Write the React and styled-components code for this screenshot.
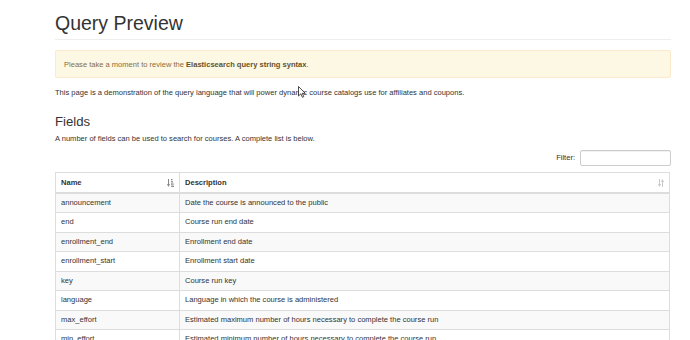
import React from 'react'
import styled, {createGlobalStyle} from 'styled-components'

const GlobalStyle = createGlobalStyle`
	html, body {
		margin: 0;
		padding: 0;
		background: #fff;
	}
	body {
		font-family: "Liberation Sans", Arial, sans-serif;
		font-size: 7.55px;
		line-height: 11px;
		color: #333;
	}
`

const Container = styled.div`
	position: relative;
	width: 616px;
	margin-left: 55px;
	padding-top: 12px;
`

const PageHeader = styled.div`
	padding-bottom: 5px;
	border-bottom: 1px solid #eee;
`

const Title = styled.h1`
	margin: 0;
	font-size: 19.5px;
	line-height: 22px;
	font-weight: 400;
	color: #333;
`

const Alert = styled.div`
	margin-top: 10px;
	padding: 7.5px 8px;
	background: #fcf8e3;
	border: 1px solid #faebcc;
	border-radius: 2px;
	color: #8a6d3b;
`

const AlertLink = styled.a`
	font-weight: 700;
	color: #66512c;
	text-decoration: none;
`

const Lead = styled.p`
	margin: ${p => p.$top || 0}px 0 0;
`

const Section = styled.h2`
	margin: 16px 0 0;
	font-size: 13.2px;
	line-height: 15.4px;
	font-weight: 400;
`

const FilterRow = styled.div`
	display: flex;
	justify-content: flex-end;
	align-items: center;
	gap: 5px;
	margin-top: 6px;
	color: #333;
`

const FilterInput = styled.input`
	box-sizing: border-box;
	width: 91px;
	height: 16px;
	margin: 0;
	border: 1px solid #ccc;
	border-radius: 2px;
	box-shadow: inset 0 1px 1px rgba(0, 0, 0, 0.06);
	font: inherit;
`

const Table = styled.table`
	width: 615px;
	margin-top: 6px;
	border-collapse: collapse;
	table-layout: fixed;
	border: 1px solid #ddd;
`

const HeadCell = styled.th`
	position: relative;
	padding: 4px 5px;
	line-height: 11px;
	text-align: left;
	font-weight: 700;
	border: 1px solid #ddd;
	border-bottom-width: 2px;
`

const SortIcon = styled.svg`
	position: absolute;
	right: ${p => p.$right}px;
	top: 6px;
`

const Row = styled.tr`
	background: ${p => (p.$striped ? '#f9f9f9' : '#fff')};
`

const Cell = styled.td`
	padding: 4px 5px;
	line-height: 10.5px;
	border: 1px solid #ddd;
	white-space: nowrap;
	overflow: hidden;
`

const Cursor = styled.svg`
	position: absolute;
	left: 243px;
	top: 86px;
`

const fields = [
	['announcement', 'Date the course is announced to the public'],
	['end', 'Course run end date'],
	['enrollment_end', 'Enrollment end date'],
	['enrollment_start', 'Enrollment start date'],
	['key', 'Course run key'],
	['language', 'Language in which the course is administered'],
	['max_effort', 'Estimated maximum number of hours necessary to complete the course run'],
	['min_effort', 'Estimated minimum number of hours necessary to complete the course run'],
]

function SortAsc() {
	return (
		<SortIcon $right={5} width="7" height="8" viewBox="0 0 7 8">
			<g fill="#888">
				<rect x="1" y="0" width="1" height="6" />
				<polygon points="0,5 3,5 1.5,8" />
				<rect x="4" y="0" width="1.5" height="1.3" />
				<rect x="4" y="2.2" width="2" height="1.3" />
				<rect x="4" y="4.4" width="2.6" height="1.3" />
				<rect x="4" y="6.6" width="3" height="1.3" />
			</g>
		</SortIcon>
	)
}

function SortBoth() {
	return (
		<SortIcon $right={5} width="6" height="8" viewBox="0 0 6 8">
			<g fill="#c8c8c8">
				<rect x="1" y="0" width="1" height="6" />
				<polygon points="0,5 3,5 1.5,8" />
				<rect x="4" y="2" width="1" height="6" />
				<polygon points="3,3 6,3 4.5,0" />
			</g>
		</SortIcon>
	)
}

export default function App() {
	return (
		<Container>
			<GlobalStyle />
			<PageHeader>
				<Title>Query Preview</Title>
			</PageHeader>
			<Alert>
				Please take a moment to review the <AlertLink>Elasticsearch query string syntax</AlertLink>.
			</Alert>
			<Lead $top={9}>
				This page is a demonstration of the query language that will power dynamic course catalogs use for
				affiliates and coupons.
			</Lead>
			<Section>Fields</Section>
			<Lead $top={3.5}>A number of fields can be used to search for courses. A complete list is below.</Lead>
			<FilterRow>
				<label>Filter:</label>
				<FilterInput type="search" />
			</FilterRow>
			<Table>
				<colgroup>
					<col style={{width: 124}} />
					<col />
				</colgroup>
				<thead>
					<tr>
						<HeadCell>
							Name
							<SortAsc />
						</HeadCell>
						<HeadCell>
							Description
							<SortBoth />
						</HeadCell>
					</tr>
				</thead>
				<tbody>
					{fields.map(([name, desc], i) => (
						<Row key={i} $striped={i % 2 === 0}>
							<Cell>{name}</Cell>
							<Cell>{desc}</Cell>
						</Row>
					))}
				</tbody>
			</Table>
			<Cursor width="8" height="12" viewBox="0 0 8 12">
				<path d="M0.5 0.5 L0.5 10 L2.8 7.8 L4.4 11.3 L5.8 10.7 L4.3 7.3 L7.3 7.3 Z" fill="#fff" stroke="#222" strokeWidth="0.8" />
			</Cursor>
		</Container>
	)
}
